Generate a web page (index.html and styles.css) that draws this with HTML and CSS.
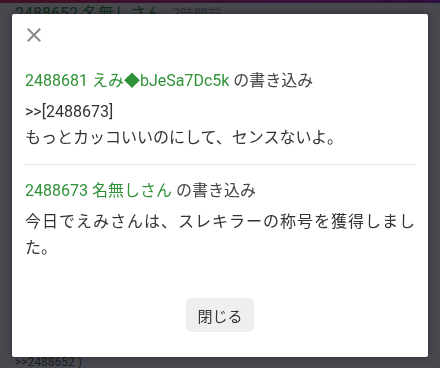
FILE: index.html
```html
<!DOCTYPE html>
<html lang="ja">
<head>
    <meta charset="UTF-8">
    <meta name="viewport" content="width=device-width, initial-scale=1.0">
    <title>書き込み</title>
    <link rel="stylesheet" href="styles.css">
</head>
<body>
    <div class="page">
        <div class="topbar"></div>
        <div class="post-head">
            <span class="num">2488652 名無しさん</span>
            <span class="time">2時間前</span>
        </div>
        <div class="post-text">&gt;&gt;2488652 )</div>
    </div>

    <div class="overlay">
        <div class="modal">
            <button class="close" type="button" aria-label="閉じる">
                <svg width="14" height="14" viewBox="0 0 14 14">
                    <path d="M1.5 1.5 L12.5 12.5 M12.5 1.5 L1.5 12.5" stroke="#8a8a8a" stroke-width="2" stroke-linecap="square"/>
                </svg>
            </button>

            <div class="res">
                <div class="res-head"><span class="name">2488681 えみ◆bJeSa7Dc5k</span> の書き込み</div>
                <div class="res-body">&gt;&gt;[2488673]<br>もっとカッコいいのにして、センスないよ。</div>
            </div>
            <div class="res">
                <div class="res-head"><span class="name">2488673 名無しさん</span> の書き込み</div>
                <div class="res-body">今日でえみさんは、スレキラーの称号を獲得しました。</div>
            </div>

            <div class="actions">
                <button class="btn" type="button">閉じる</button>
            </div>
        </div>
    </div>
</body>
</html>
```

FILE: styles.css
```css
body {
    margin: 0;
    background: #fff;
    font-family: Roboto, "Noto Sans CJK JP", sans-serif;
    color: #333;
    overflow: hidden;
}
.page {
    height: 368px;
    display: flex;
    flex-direction: column;
}
.topbar {
    height: 3px;
    background: linear-gradient(90deg, #e8245a, #a020c0);
}
.post-head {
    padding: 0 15px;
    font-size: 16px;
    line-height: 22px;
}
.post-head .num {
    color: #2e8b36;
}
.post-head .time {
    color: #999;
    font-size: 14px;
    margin-left: 6px;
}
.post-text {
    margin-top: auto;
    padding: 0 15px 1px;
    font-size: 12px;
    line-height: 10px;
    color: #555;
}
.overlay {
    position: fixed;
    inset: 0;
    background: rgba(10, 12, 20, 0.75);
    padding: 14px 12px;
}
.modal {
    background: #fff;
    width: 416px;
    height: 343px;
    box-sizing: border-box;
    padding: 14px 13px 0;
    border-radius: 2px;
    box-shadow: 0 0 6px rgba(0, 0, 0, 0.45);
    display: flex;
    flex-direction: column;
}
.close {
    background: none;
    border: none;
    padding: 0;
    margin-left: 2px;
    width: 14px;
    height: 14px;
    display: block;
    cursor: pointer;
}
.close svg {
    display: block;
}
.res {
    padding: 13px 0;
}
.res:first-of-type {
    padding-top: 26px;
    border-bottom: 1px solid #e4e4e4;
}
.res-head {
    font-size: 16px;
    line-height: 26px;
    color: #444;
}
.res-head .name {
    color: #2f9236;
}
.res-body {
    margin-top: 5px;
    font-size: 16px;
    line-height: 26px;
    color: #333;
    text-align: justify;
}
.actions {
    display: flex;
    justify-content: center;
    margin-top: 24px;
}
.btn {
    font-family: Roboto, "Noto Sans CJK JP", sans-serif;
    font-size: 15px;
    color: #333;
    background: #efefef;
    border: none;
    border-radius: 5px;
    height: 34px;
    padding: 0 11px;
    cursor: pointer;
}
```
